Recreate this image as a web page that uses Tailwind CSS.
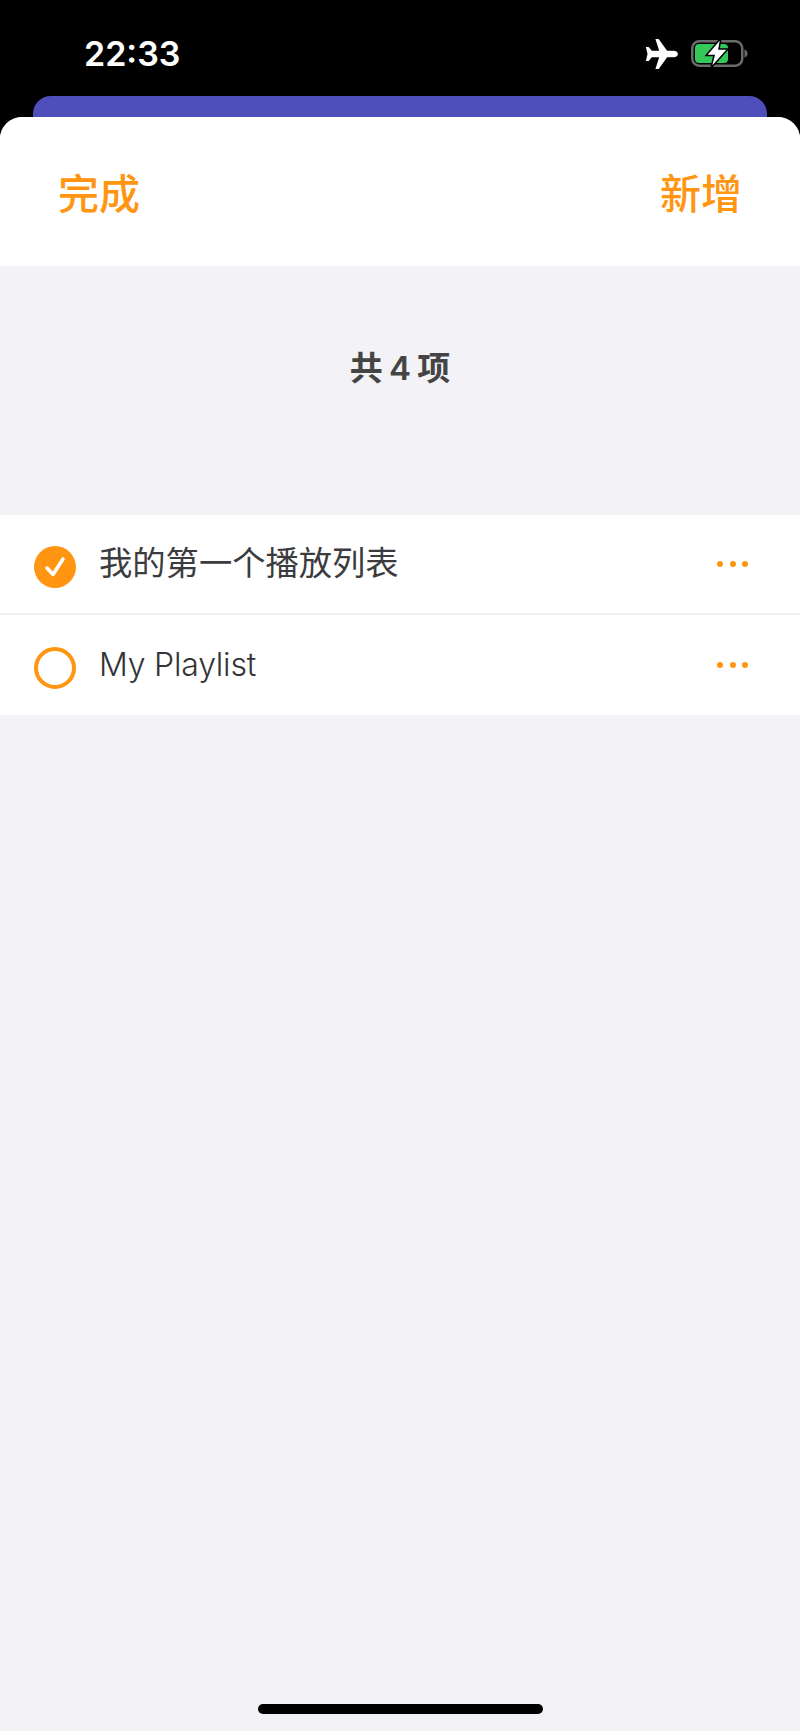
<!DOCTYPE html>
<html lang="zh-CN">
<head>
  <meta charset="UTF-8">
  <meta name="viewport" content="width=device-width, initial-scale=1.0">
  <title>播放列表</title>
  <script src="https://cdn.jsdelivr.net/npm/@tailwindcss/browser@4"></script>
</head>
<body class="bg-black font-['Inter','Noto_Sans_CJK_SC',sans-serif]">
  <div class="flex flex-col w-[800px] h-[1731px] overflow-hidden bg-black">

    <!-- Status bar -->
    <div class="flex items-center justify-between h-[96px] shrink-0 pl-[84px] pr-[52px] pt-[11px] text-white">
      <span class="text-[34px] font-semibold leading-none">22:33</span>
      <div class="flex items-center gap-[13px]">
        <svg class="w-[33px] h-[30px]" viewBox="0 0 35 32" fill="#fff">
          <path d="M11 0h3.500l9 12.600h7.200c2.400 0 4.300 1.500 4.300 3.400s-1.900 3.400-4.300 3.400h-7.200l-9 12.600H11l4-12.600H7.200L3.800 23.500H.8L2.600 16 .8 8.500h3l3.400 4.100H15z"/>
        </svg>
        <svg class="w-[57px] h-[27px] overflow-visible" viewBox="0 0 57 27">
          <rect x="1.250" y="1.250" width="50" height="24.500" rx="7" fill="none" stroke="#6b6b6b" stroke-width="2.500"/>
          <path d="M53.500 9.500c2 .5 3 2 3 4s-1 3.500-3 4z" fill="#6b6b6b"/>
          <rect x="4" y="4" width="33" height="19" rx="4" fill="#34c759"/>
          <path d="M30-2 15 15.500h8L20 28 37 9h-9z" fill="#fff" stroke="#000" stroke-width="1.500"/>
        </svg>
      </div>
    </div>

    <!-- Card behind the sheet -->
    <div class="h-[21px] shrink-0 mx-[33px] rounded-t-[18px] bg-[#4f4fbb]"></div>

    <!-- Sheet -->
    <div class="flex flex-col flex-1 rounded-t-[22px] overflow-hidden bg-[#f2f2f7]">
      <div class="flex items-center justify-between h-[149px] shrink-0 pl-[58px] pr-[58px] pt-[5px] bg-white text-[41px] font-medium leading-none text-[#ff9510]">
        <span>完成</span>
        <span>新增</span>
      </div>

      <div class="flex items-center justify-center h-[204px] mb-[45px] shrink-0 text-[33px] font-semibold leading-none [word-spacing:-2px] text-[#444444]">
        共 4 项
      </div>

      <div class="bg-white text-[33.300px] leading-none text-[#3c3c3f]">
        <div class="flex items-center h-[98px] pl-[34px] pr-[52px] border-b-2 border-[#f0f0f4] box-content">
          <svg class="w-[42px] h-[42px] shrink-0 mt-[6px]" viewBox="0 0 42 42">
            <circle cx="21" cy="21" r="21" fill="#ff9510"/>
            <path d="M13 22l6 6.500L29 13" fill="none" stroke="#fff" stroke-width="3.500" stroke-linecap="round" stroke-linejoin="round"/>
          </svg>
          <span class="ml-[23px] flex-1">我的第一个播放列表</span>
          <div class="flex gap-[6.500px]">
            <span class="size-[6px] rounded-full bg-[#ff9510]"></span>
            <span class="size-[6px] rounded-full bg-[#ff9510]"></span>
            <span class="size-[6px] rounded-full bg-[#ff9510]"></span>
          </div>
        </div>
        <div class="flex items-center h-[100px] pl-[34px] pr-[52px]">
          <div class="size-[42px] shrink-0 mt-[6px] rounded-full border-[4px] border-[#ff9510]"></div>
          <span class="ml-[23px] flex-1 text-[32px] font-light tracking-[-0.2px] text-[#333336]">My Playlist</span>
          <div class="flex gap-[6.500px]">
            <span class="size-[6px] rounded-full bg-[#ff9510]"></span>
            <span class="size-[6px] rounded-full bg-[#ff9510]"></span>
            <span class="size-[6px] rounded-full bg-[#ff9510]"></span>
          </div>
        </div>
      </div>

      <div class="flex flex-col justify-end items-center flex-1 pb-[17px]">
        <div class="w-[285px] h-[10px] rounded-full bg-black"></div>
      </div>
    </div>
  </div>
</body>
</html>
